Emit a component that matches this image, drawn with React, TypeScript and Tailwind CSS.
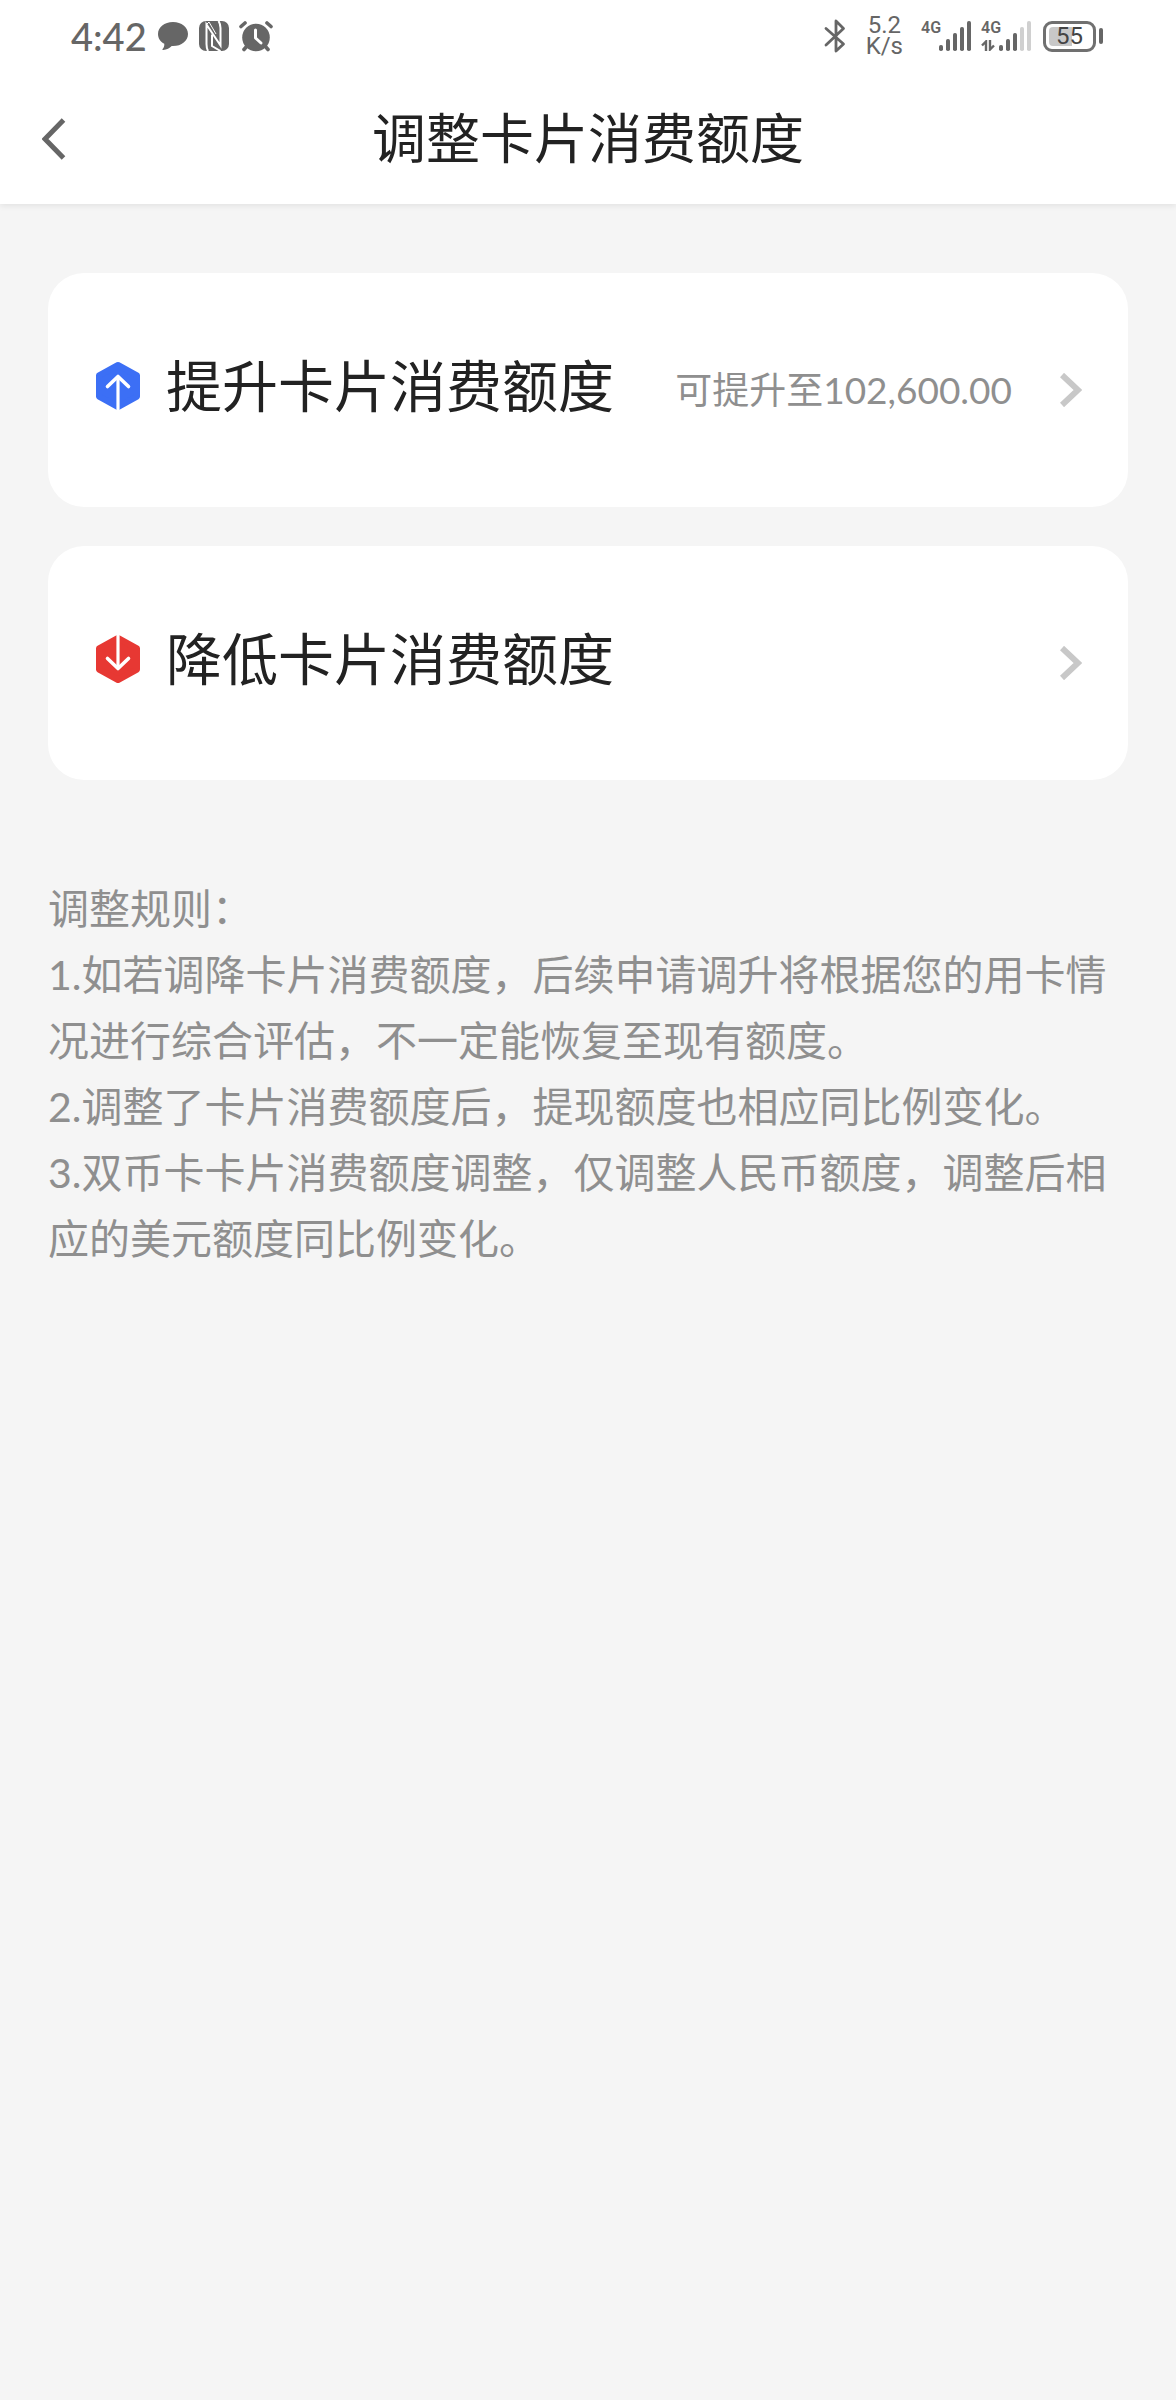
import type { ReactNode } from "react";

function ChatIcon() {
  return (
    <svg viewBox="0 0 32 30" className="h-[30px] w-8" fill="currentColor" aria-hidden="true">
      <path d="M16 1C7.400 1 1 6.200 1 13c0 4.400 2.400 7.800 6.300 9.800.2 2.200-.5 4-1.700 5.300-.4.500 0 1.100.6 1 3.600-.4 6.400-1.800 8.500-4H16c8.600 0 15-5.300 15-12.100S24.600 1 16 1Z" />
    </svg>
  );
}

function NfcIcon() {
  return (
    <svg viewBox="0 0 30 30" className="size-[30px]" aria-hidden="true">
      <rect width="30" height="30" rx="7" fill="currentColor" />
      <path d="M9 30Q7.500 27 7.500 23V3.500L21.500 24.500V7Q21.500 3 19.500 0" fill="none" stroke="#fff" strokeWidth="2" />
      <path d="M13 13.500V25l8.500 5" fill="none" stroke="#fff" strokeWidth="2" />
      <path d="M7.500 3.500 10 1l7 12" fill="none" stroke="#fff" strokeWidth="1" />
    </svg>
  );
}

function AlarmIcon() {
  return (
    <svg viewBox="0 0 34 31" className="h-[31px] w-[34px]" fill="none" stroke="currentColor" strokeLinecap="round" aria-hidden="true">
      <circle cx="17" cy="16.500" r="13.800" fill="currentColor" stroke="none" />
      <path d="M2 5.500 6 2M32 5.500 28 2" strokeWidth="3.600" />
      <path d="m8 25-3 3.500M26 25l3 3.500" strokeWidth="3.600" />
      <path d="M16.500 9v8l5.500 5" stroke="#fff" strokeWidth="3" strokeLinejoin="round" />
    </svg>
  );
}

function BluetoothIcon() {
  return (
    <svg viewBox="0 0 22 34" className="h-[34px] w-[22px]" fill="none" stroke="currentColor" strokeWidth="2.800" strokeLinecap="round" strokeLinejoin="round" aria-hidden="true">
      <path d="M2 9.500 19.500 25 12 32V2L19.500 9.500 2 26" />
    </svg>
  );
}

function SignalBars({ level }: { level: number }) {
  return (
    <svg viewBox="0 0 32 31" className="h-[31px] w-8" aria-hidden="true">
      {[25, 19, 13, 7, 1].map((y, i) => (
        <rect key={y} x={i * 7} y={y} width="4" height={31 - y} rx="1.800" fill={i < level ? "#666" : "#d0d0d0"} />
      ))}
    </svg>
  );
}

function DataArrows() {
  return (
    <svg viewBox="0 0 14 11" className="h-[11px] w-3.5" fill="none" stroke="currentColor" strokeWidth="2.400" aria-hidden="true">
      <path d="M5 11V1.500L1 5.500M9 0v9.500l4-4" />
    </svg>
  );
}

function Battery() {
  return (
    <div className="flex items-center gap-[3px]">
      <div className="flex h-[31px] w-[53px] rounded-[9px] border-[3px] border-[#707070] p-[3px]">
        <div className="flex w-full items-center justify-center rounded-[4px] bg-linear-to-r from-[#c8c8c8] from-55% to-white to-55% font-[Roboto] text-2xl leading-none text-[#444]">
          55
        </div>
      </div>
      <div className="h-4 w-1 rounded-full bg-[#666]" />
    </div>
  );
}

function StatusBar() {
  return (
    <div className="flex h-[72px] items-center justify-between pr-[73px] pl-[71px] text-[#666]">
      <div className="flex items-center gap-2.5">
        <span className="font-[Lato] text-[38px] leading-none font-medium">4:42</span>
        <ChatIcon />
        <NfcIcon />
        <AlarmIcon />
      </div>
      <div className="flex items-center">
        <BluetoothIcon />
        <div className="ml-5 text-center font-[Roboto] text-2xl leading-[21px]">
          5.2
          <br />
          K/s
        </div>
        <div className="ml-[18px] flex h-8 items-start">
          <span className="w-[18px] font-['Liberation_Sans_Narrow',Roboto] text-base leading-4 font-semibold">4G</span>
          <SignalBars level={5} />
        </div>
        <div className="ml-2.5 flex h-8 items-start">
          <div className="flex w-[18px] flex-col gap-1">
            <span className="font-['Liberation_Sans_Narrow',Roboto] text-base leading-4 font-semibold">4G</span>
            <DataArrows />
          </div>
          <SignalBars level={3} />
        </div>
        <div className="ml-3">
          <Battery />
        </div>
      </div>
    </div>
  );
}

function RaiseIcon() {
  return (
    <svg viewBox="0 0 44 48" className="h-12 w-11" fill="none" aria-hidden="true">
      <path d="M22 3 41 13.500V34.500L22 45 3 34.500V13.500Z" fill="#3c6ff5" stroke="#3c6ff5" strokeWidth="6" strokeLinejoin="round" />
      <path d="M22 14v34" stroke="#fff" strokeWidth="3.200" />
      <path d="m11.500 24.500 10.500-10 10.500 10" stroke="#fff" strokeWidth="3.600" strokeLinecap="round" strokeLinejoin="round" />
    </svg>
  );
}

function LowerIcon() {
  return (
    <svg viewBox="0 0 44 48" className="h-12 w-11" fill="none" aria-hidden="true">
      <path d="M22 3 41 13.500V34.500L22 45 3 34.500V13.500Z" fill="#e73833" stroke="#e73833" strokeWidth="6" strokeLinejoin="round" />
      <path d="M22 0v34" stroke="#fff" strokeWidth="3.200" />
      <path d="m11.500 23.500 10.500 10 10.500-10" stroke="#fff" strokeWidth="3.600" strokeLinecap="round" strokeLinejoin="round" />
    </svg>
  );
}

function OptionCard({ icon, title, note }: { icon: ReactNode; title: string; note?: string }) {
  return (
    <button type="button" className="flex h-[234px] w-full items-center rounded-[36px] bg-white pr-[46px] pl-12 text-left">
      <span className="flex items-center gap-[26px] pb-2">
        {icon}
        <span className="text-[56px] leading-[64px] whitespace-nowrap text-[#222]">{title}</span>
      </span>
      {note && <span className="ml-auto text-[37px] leading-[48px] whitespace-nowrap text-[#8f8f8f]">{note}</span>}
      <svg viewBox="0 0 22 34" className={note ? "ml-12 h-[34px] w-[22px]" : "ml-auto h-[34px] w-[22px]"} fill="none" stroke="#c8c8c8" strokeWidth="6" aria-hidden="true">
        <path d="m2 2 16 15L2 32" />
      </svg>
    </button>
  );
}

const rules = [
  "1.如若调降卡片消费额度，后续申请调升将根据您的用卡情况进行综合评估，不一定能恢复至现有额度。",
  "2.调整了卡片消费额度后，提现额度也相应同比例变化。",
  "3.双币卡卡片消费额度调整，仅调整人民币额度，调整后相应的美元额度同比例变化。",
];

export default function App() {
  return (
    <div className="min-h-screen bg-[#f5f5f5] font-[Lato,'Noto_Sans_CJK_SC',sans-serif]" lang="zh-CN">
      <header className="bg-white shadow-[0_2px_6px_rgba(0,0,0,0.08)]">
        <StatusBar />
        <div className="grid h-[132px] grid-cols-[1fr_auto_1fr] items-center pt-0.5">
          <button type="button" aria-label="返回" className="w-fit px-[42px] py-4">
            <svg viewBox="0 0 24 42" className="h-[42px] w-6" fill="none" stroke="#666" strokeWidth="5" aria-hidden="true">
              <path d="M21.500 2 3 21l18.500 19" />
            </svg>
          </button>
          <h1 className="text-[54px] leading-[64px] text-[#222]">调整卡片消费额度</h1>
        </div>
      </header>
      <main className="px-12 pt-[69px]">
        <div className="flex flex-col gap-[39px]">
          <OptionCard icon={<RaiseIcon />} title="提升卡片消费额度" note="可提升至102,600.00" />
          <OptionCard icon={<LowerIcon />} title="降低卡片消费额度" />
        </div>
        <section className="mt-24 text-[41px] leading-[66px] text-[#8f8f8f]">
          <h2>调整规则：</h2>
          {rules.map((rule) => (
            <p key={rule}>{rule}</p>
          ))}
        </section>
      </main>
    </div>
  );
}
